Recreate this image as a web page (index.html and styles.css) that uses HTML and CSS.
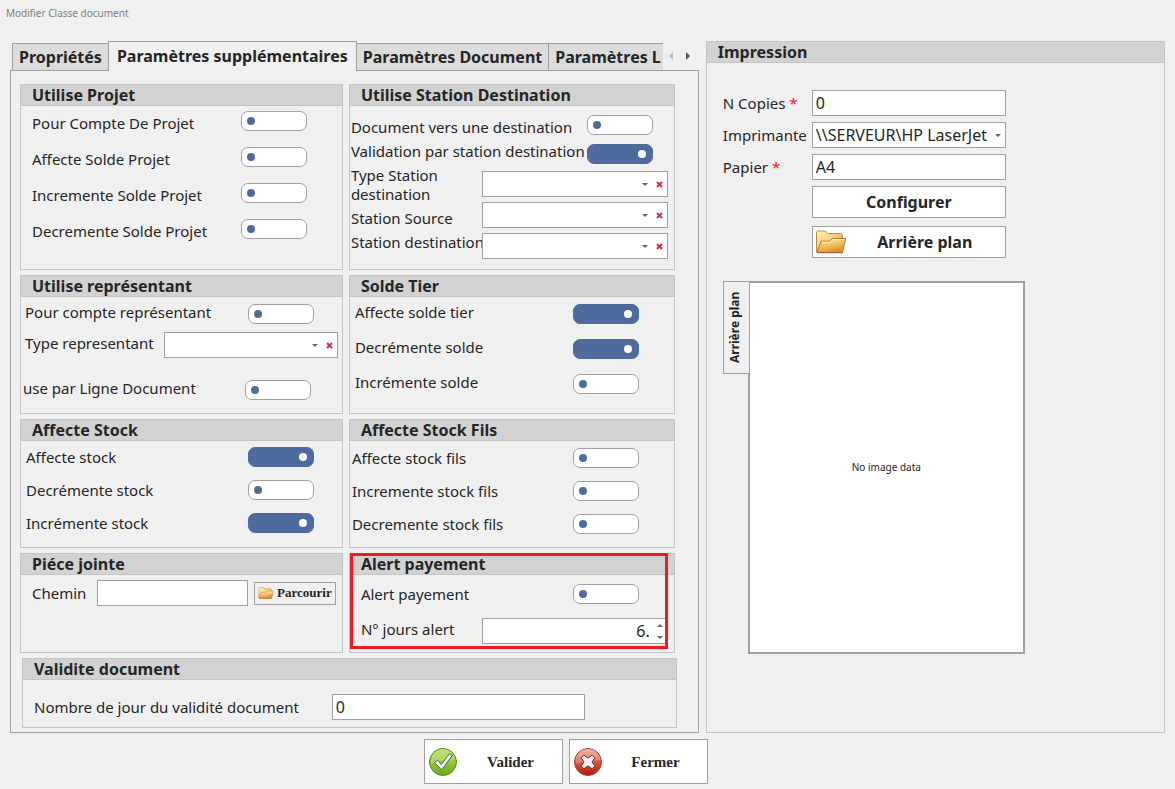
FILE: index.html
```html
<!DOCTYPE html>
<html lang="fr">
<head>
<meta charset="utf-8">
<title>Modifier Classe document</title>
<link rel="stylesheet" href="styles.css">
</head>
<body>
<svg class="defs" aria-hidden="true">
  <defs>
    <linearGradient id="folderBack" x1="0" y1="0" x2="1" y2="1"><stop offset="0" stop-color="#fff6c0"/><stop offset="0.5" stop-color="#f3cf74"/><stop offset="1" stop-color="#c98428"/></linearGradient>
    <linearGradient id="folderFront" x1="0" y1="0" x2="0.4" y2="1"><stop offset="0" stop-color="#fde6a4"/><stop offset="0.5" stop-color="#f6c468"/><stop offset="1" stop-color="#e1912f"/></linearGradient>
    <linearGradient id="greenBall" x1="0" y1="0" x2="0" y2="1"><stop offset="0" stop-color="#b9dc5c"/><stop offset="0.5" stop-color="#93c83a"/><stop offset="1" stop-color="#6fa524"/></linearGradient>
    <linearGradient id="redBall" x1="0" y1="0" x2="0" y2="1"><stop offset="0" stop-color="#e9a292"/><stop offset="0.45" stop-color="#d9604c"/><stop offset="1" stop-color="#b0150f"/></linearGradient>
    <symbol id="folder" viewBox="0 0 32 24">
      <path d="M1.500 22V2.200L2.500 1h8l2 2.600h13.600l1.200 1.300V19L25 22z" fill="url(#folderBack)" stroke="#c08a3e"/>
      <path d="M2 22.500L6 11.200h8.500l3-2.700h13.200L27.500 22.500z" fill="url(#folderFront)" stroke="#b97a33"/>
      <path d="M6.800 12.300h8.200l3-2.700h11.300" fill="none" stroke="#fff3cc"/>
      <path d="M2 22.700h25.500" stroke="#a35424"/>
    </symbol>
  </defs>
</svg>

<h1 class="title">Modifier Classe document</h1>

<main class="layout">
  <section class="left">
    <div class="tabbar">
      <div class="tabs" role="tablist">
        <button class="tab" role="tab" type="button">Propriétés</button>
        <button class="tab active" role="tab" type="button" aria-selected="true">Paramètres supplémentaires</button>
        <button class="tab" role="tab" type="button">Paramètres Document</button>
        <button class="tab" role="tab" type="button">Paramètres L</button>
      </div>
      <button class="scroll" type="button" disabled aria-label="Précédent"><svg viewBox="0 0 4 8"><path d="M4 0v8L0 4z"/></svg></button>
      <button class="scroll" type="button" aria-label="Suivant"><svg viewBox="0 0 4 8"><path d="M0 0v8l4-4z"/></svg></button>
    </div>

    <div class="sheet">
      <div class="columns">
        <div class="column">
          <section class="group projet">
            <h2>Utilise Projet</h2>
            <div class="body">
              <div class="row"><label for="p1">Pour Compte De Projet</label><input class="toggle" type="checkbox" id="p1"></div>
              <div class="row"><label for="p2">Affecte Solde Projet</label><input class="toggle" type="checkbox" id="p2"></div>
              <div class="row"><label for="p3">Incremente Solde Projet</label><input class="toggle" type="checkbox" id="p3"></div>
              <div class="row"><label for="p4">Decremente Solde Projet</label><input class="toggle" type="checkbox" id="p4"></div>
            </div>
          </section>
          <section class="group representant">
            <h2>Utilise représentant</h2>
            <div class="body">
              <div class="row"><label for="r1">Pour compte représentant</label><input class="toggle" type="checkbox" id="r1"></div>
              <div class="row pick"><label for="r2">Type representant</label>
                <div class="combo"><select id="r2"><option></option></select><svg class="caret" viewBox="0 0 6 3"><path d="M0 0h6L3 3z"/></svg><button class="clear" type="button" aria-label="Effacer"><svg viewBox="0 0 7 7"><path d="M1 1l5 5M6 1L1 6"/></svg></button></div>
              </div>
              <div class="row ligne"><label for="r3">use par Ligne Document</label><input class="toggle" type="checkbox" id="r3"></div>
            </div>
          </section>
          <section class="group stock">
            <h2>Affecte Stock</h2>
            <div class="body">
              <div class="row"><label for="s1">Affecte stock</label><input class="toggle" type="checkbox" id="s1" checked></div>
              <div class="row"><label for="s2">Decrémente stock</label><input class="toggle" type="checkbox" id="s2"></div>
              <div class="row"><label for="s3">Incrémente stock</label><input class="toggle" type="checkbox" id="s3" checked></div>
            </div>
          </section>
          <section class="group piece">
            <h2>Piéce jointe</h2>
            <div class="body">
              <div class="row"><label for="chemin">Chemin</label><input class="field" type="text" id="chemin">
                <button class="browse" type="button"><svg viewBox="0 0 32 24"><use href="#folder"/></svg>Parcourir</button></div>
            </div>
          </section>
        </div>

        <div class="column">
          <section class="group station">
            <h2>Utilise Station Destination</h2>
            <div class="body">
              <div class="captions">
                <label for="d1">Document vers une destination</label>
                <label for="d2">Validation par station destination</label>
                <label for="d3">Type Station<br>destination</label>
                <label for="d4">Station Source</label>
                <label for="d5">Station destination</label>
              </div>
              <div class="controls">
                <input class="toggle" type="checkbox" id="d1">
                <input class="toggle" type="checkbox" id="d2" checked>
                <div class="combo"><select id="d3"><option></option></select><svg class="caret" viewBox="0 0 6 3"><path d="M0 0h6L3 3z"/></svg><button class="clear" type="button" aria-label="Effacer"><svg viewBox="0 0 7 7"><path d="M1 1l5 5M6 1L1 6"/></svg></button></div>
                <div class="combo"><select id="d4"><option></option></select><svg class="caret" viewBox="0 0 6 3"><path d="M0 0h6L3 3z"/></svg><button class="clear" type="button" aria-label="Effacer"><svg viewBox="0 0 7 7"><path d="M1 1l5 5M6 1L1 6"/></svg></button></div>
                <div class="combo"><select id="d5"><option></option></select><svg class="caret" viewBox="0 0 6 3"><path d="M0 0h6L3 3z"/></svg><button class="clear" type="button" aria-label="Effacer"><svg viewBox="0 0 7 7"><path d="M1 1l5 5M6 1L1 6"/></svg></button></div>
              </div>
            </div>
          </section>
          <section class="group solde">
            <h2>Solde Tier</h2>
            <div class="body">
              <div class="row"><label for="t1">Affecte solde tier</label><input class="toggle" type="checkbox" id="t1" checked></div>
              <div class="row"><label for="t2">Decrémente solde</label><input class="toggle" type="checkbox" id="t2" checked></div>
              <div class="row"><label for="t3">Incrémente solde</label><input class="toggle" type="checkbox" id="t3"></div>
            </div>
          </section>
          <section class="group stock fils">
            <h2>Affecte Stock Fils</h2>
            <div class="body">
              <div class="row"><label for="f1">Affecte stock fils</label><input class="toggle" type="checkbox" id="f1"></div>
              <div class="row"><label for="f2">Incremente stock fils</label><input class="toggle" type="checkbox" id="f2"></div>
              <div class="row"><label for="f3">Decremente stock fils</label><input class="toggle" type="checkbox" id="f3"></div>
            </div>
          </section>
          <section class="group alert">
            <h2>Alert payement</h2>
            <div class="body">
              <div class="row"><label for="a1">Alert payement</label><input class="toggle" type="checkbox" id="a1"></div>
              <div class="row days"><label for="a2">N° jours alert</label>
                <div class="spin"><input type="text" inputmode="numeric" id="a2" value="6."><span class="arrows"><button type="button" aria-label="Plus"><svg viewBox="0 0 6 3"><path d="M0 3h6L3 0z"/></svg></button><button type="button" aria-label="Moins"><svg viewBox="0 0 6 3"><path d="M0 0h6L3 3z"/></svg></button></span></div>
              </div>
            </div>
            <div class="highlight"></div>
          </section>
        </div>
      </div>

      <section class="group validite">
        <h2>Validite document</h2>
        <div class="body">
          <div class="row"><label for="v1">Nombre de jour du validité document</label><input class="field" type="text" id="v1" value="0"></div>
        </div>
      </section>
    </div>
  </section>

  <section class="group impression">
    <h2>Impression</h2>
    <div class="body">
      <div class="form">
        <label for="i1">N Copies <span class="req">*</span></label><input class="field" type="text" id="i1" value="0">
        <label for="i2">Imprimante</label><div class="combo"><select id="i2"><option>\\SERVEUR\HP LaserJet</option></select><svg class="caret" viewBox="0 0 6 3"><path d="M0 0h6L3 3z"/></svg></div>
        <label for="i3">Papier <span class="req">*</span></label><input class="field" type="text" id="i3" value="A4">
        <div class="actions">
          <button class="action" type="button">Configurer</button>
          <button class="action with-icon" type="button"><svg viewBox="0 0 32 24"><use href="#folder"/></svg><span>Arrière plan</span></button>
        </div>
      </div>
      <div class="preview">
        <button class="side-tab" type="button">Arrière plan</button>
        <div class="image">No image data</div>
      </div>
    </div>
  </section>
</main>

<footer class="footer">
  <button class="command" type="button">
    <svg viewBox="0 0 30 30"><circle cx="15" cy="15" r="13.500" fill="url(#greenBall)" stroke="#568a1d"/><path d="M3 14a12 11.500 0 0 1 24-1Q16 12 3 17z" fill="#fff" opacity=".22"/><path d="M6.500 15.500l3.200-2.300 3.600 4.300L21.500 6.500l3 1.500L13.800 23z" fill="#eef0f6" stroke="#4e6e2c"/></svg>
    <span>Valider</span>
  </button>
  <button class="command" type="button">
    <svg viewBox="0 0 30 30"><circle cx="15" cy="15" r="13.500" fill="url(#redBall)" stroke="#a93a2c"/><path d="M2.500 14a12.500 12 0 0 1 25-1Q16 13 2.500 17z" fill="#fff" opacity=".22"/><path d="M11 8.200l4 3 4-3 2.800 2.800-2.800 4 2.800 4-2.800 2.800-4-3-4 3L8.200 19l2.800-4-2.800-4z" fill="#eef0f8" stroke="#8d2320" stroke-linejoin="round"/></svg>
    <span>Fermer</span>
  </button>
</footer>
</body>
</html>
```
FILE: styles.css
```css
* { box-sizing: border-box; }

body {
  margin: 0;
  min-height: 100vh;
  background: #f0f0f0;
  color: #262626;
  font: 15px/19px "Noto Sans", Tahoma, sans-serif;
}

button, input, select {
  font: inherit;
  color: inherit;
  margin: 0;
}

svg { display: block; flex: none; }
.defs { position: absolute; width: 0; height: 0; }

.title {
  margin: 0;
  padding: 5px 6px 0;
  height: 41px;
  font-size: 10px;
  line-height: 16px;
  font-weight: 400;
  color: #808080;
}

.layout {
  display: grid;
  grid-template-columns: 3fr 2fr;
  gap: 7px;
  padding: 0 10px;
}

.left { display: flex; flex-direction: column; min-width: 0; }

/* Tabs */
.tabbar { display: flex; align-items: center; height: 30px; margin-bottom: -1px; padding: 0 2px; }
.tabs { display: flex; align-items: flex-end; flex: 1; min-width: 0; height: 30px; overflow: hidden; }
.tab {
  flex: none;
  height: 28px;
  padding: 0 6px;
  border: 1px solid #a0a0a0;
  background: #dcdcdc;
  font-size: 16px;
  font-weight: 700;
  white-space: nowrap;
}
.tab + .tab { margin-left: -1px; }
.tab.active {
  position: relative;
  height: 30px;
  padding: 0 8px;
  border-bottom: 0;
  background: #f0f0f0;
}
.scroll { display: flex; justify-content: center; width: 17px; height: 20px; padding: 6px 0; border: 0; background: none; }
.scroll svg { width: 4px; height: 8px; fill: #555; }
.scroll:disabled svg { fill: #bbb; }

.sheet {
  flex: 1;
  border: 1px solid #a0a0a0;
  padding: 13px 23px 4px 9px;
}
.columns { display: grid; grid-template-columns: 323fr 326fr; gap: 6px; }
.column { display: flex; flex-direction: column; gap: 5px; min-width: 0; }

/* Group boxes */
.group { border: 1px solid #c5c5c5; min-width: 0; }
.group h2 {
  margin: 0;
  padding: 0 11px;
  border-bottom: 1px solid #c5c5c5;
  background: #d2d2d2;
  font-size: 16px;
  line-height: 20px;
  font-weight: 700;
}
.body { display: flex; flex-direction: column; }
.row { display: flex; align-items: center; justify-content: space-between; min-height: 20px; }
label { white-space: nowrap; }

.projet { height: 186px; }
.projet .body { gap: 16px; padding: 5px 35px 0 11px; }
.projet label { line-height: 16px; padding-top: 4px; }

.representant, .solde { height: 139px; }
.representant .body { gap: 8px; padding: 7px 28px 0 4px; }
.representant label, .solde label, .days label { line-height: 16px; padding-bottom: 4px; }
.representant .pick { margin-right: -24px; }
.representant .combo { width: 174px; }
.representant .ligne { margin: 14px 3px 0 -2px; }

.solde .body { gap: 15px; padding: 7px 35px 0 5px; }

.stock { height: 129px; }
.stock .body { gap: 13px; padding: 6px 28px 0 5px; }
.fils .body { padding: 7px 35px 0 2px; }

.piece, .alert { height: 100px; }
.piece .body { padding: 5px 6px 0 11px; }
.piece .row { gap: 6px; }
.piece .field { flex: 1; min-width: 0; margin-left: 5px; }

.station { height: 186px; }
.station .body { flex-direction: row; justify-content: space-between; padding: 9px 6px 0 1px; }
.captions { display: flex; flex-direction: column; gap: 5px; width: 130px; padding-top: 3px; }
.controls { display: flex; flex-direction: column; gap: 5px; width: 186px; }
.controls .toggle { align-self: flex-end; margin: 0 15px 4px 0; }
.controls .toggle + .combo { margin-top: -2px; }

.alert { position: relative; }
.alert .body { gap: 14px; padding: 9px 35px 0 11px; }
.alert .days { margin-right: -29px; }
.highlight { position: absolute; inset: -1px 6px 3px 0; border: 3px solid #ed1c24; pointer-events: none; }

.validite { margin: 5px -2px 0 2px; }
.validite .body { padding: 14px 91px 7px 11px; }
.validite .field { width: 253px; }

/* Controls */
.toggle {
  appearance: none;
  display: flex;
  align-items: center;
  flex: none;
  width: 66px;
  height: 20px;
  padding: 0 5px;
  border: 1px solid #a0a0a0;
  border-radius: 7px;
  background: #fff;
}
.toggle::before { content: ""; width: 8px; height: 8px; border-radius: 50%; background: #4d6c9d; }
.toggle:checked { justify-content: flex-end; padding-right: 6px; border-color: #4d6c9d; background: #4d6c9d; }
.toggle:checked::before { background: #fff; }

.field, .combo, .spin { height: 26px; border: 1px solid #a0a0a0; background: #fff; font-size: 16px; }
.field { padding: 0 3px; }

.combo { display: flex; align-items: center; }
.combo select { appearance: none; flex: 1; min-width: 0; height: 24px; padding: 0 3px; border: 0; background: none; }
.caret { width: 6px; height: 3px; fill: #666; }
.clear { display: flex; align-items: center; justify-content: center; width: 15px; height: 20px; padding: 0; margin-left: 4px; border: 0; background: none; }
.combo:has(.clear) { padding-right: 0; }
.clear svg { width: 7px; height: 7px; stroke: #d0324b; stroke-width: 2; fill: none; }

.spin { display: flex; width: 186px; }
.spin input { flex: 1; min-width: 0; padding: 0 3px; border: 0; background: none; text-align: right; }
.arrows { display: flex; flex-direction: column; width: 14px; }
.arrows button { display: flex; flex: 1; align-items: center; justify-content: center; padding: 0; border: 0; background: none; }
.arrows svg { width: 6px; height: 3px; fill: #666; }

.browse {
  display: flex;
  align-items: center;
  justify-content: center;
  gap: 3px;
  width: 82px;
  height: 23px;
  padding: 0;
  border: 1px solid #a0a0a0;
  background: #f0f0f0;
  font: 700 13px/16px "Liberation Serif", serif;
}
.browse svg { width: 16px; height: 12px; }

/* Printing */
.impression .body { padding: 27px 16px 16px; gap: 23px; }
.form { display: grid; grid-template-columns: 83px 194px; column-gap: 6px; row-gap: 6px; align-items: center; }
.req { color: #f01428; }
.impression .caret { margin-right: 4px; }
.actions { grid-column: 2; display: flex; flex-direction: column; gap: 8px; }
.action { display: flex; align-items: center; justify-content: center; height: 32px; padding: 0 2px; border: 1px solid #a0a0a0; background: #fff; font-size: 16px; font-weight: 700; }
.action svg { width: 32px; height: 24px; }
.action span { flex: 1; text-align: center; }

.preview { display: flex; align-items: flex-start; width: 302px; }
.side-tab {
  position: relative;
  width: 27px;
  height: 93px;
  padding: 0 0 0 4px;
  margin-right: -2px;
  border: 1px solid #a0a0a0;
  background: #f0f0f0;
  font-size: 12px;
  font-weight: 700;
  writing-mode: vertical-rl;
  transform: rotate(180deg);
}
.image { flex: 1; display: flex; align-items: center; justify-content: center; height: 373px; border: 2px solid #a0a0a0; background: #fff; font-size: 10px; }

/* Commands */
.footer { display: flex; justify-content: center; gap: 6px; padding: 6px 43px 5px 0; }
.command { display: flex; align-items: center; width: 139px; height: 45px; padding: 0 3px; border: 1px solid #a0a0a0; background: #fff; font: 700 15px/18px "Liberation Serif", serif; }
.command svg { width: 30px; height: 30px; }
.command span { flex: 1; padding-left: 4px; }
```
